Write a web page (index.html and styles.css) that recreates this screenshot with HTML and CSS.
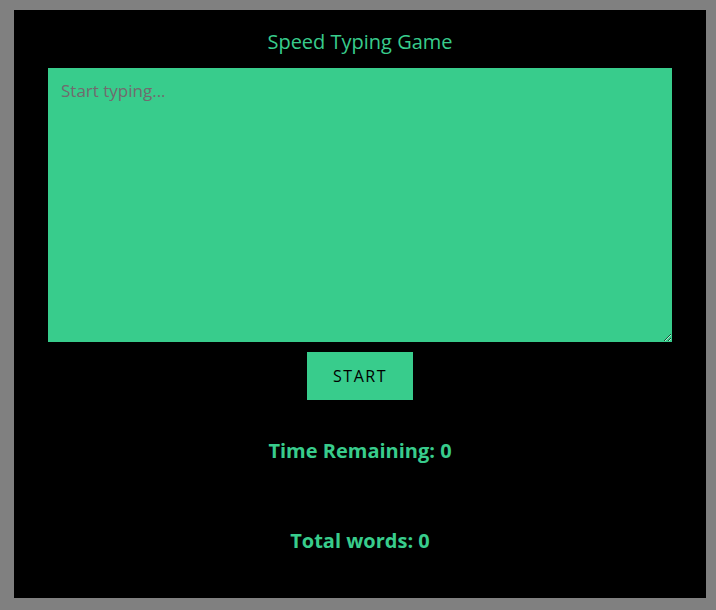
FILE: index.html
```html
<!DOCTYPE html>
<html lang="en">
<head>
<meta charset="utf-8">
<title>Speed Typing Game</title>
<link rel="stylesheet" href="styles.css">
</head>
<body>
  <main class="game">
    <h1 class="title">Speed Typing Game</h1>
    <textarea class="typing-area" placeholder="Start typing..."></textarea>
    <button class="start-btn">START</button>
    <h2 class="stat stat-time">Time Remaining: 0</h2>
    <h2 class="stat stat-words">Total words: 0</h2>
  </main>
</body>
</html>
```

FILE: styles.css
```css
html, body {
  margin: 0;
  padding: 0;
}

body {
  background: #808080;
  padding: 10px 10px 12px 14px;
  font-family: "Comic Sans MS", "Open Sans", "DejaVu Sans", sans-serif;
}

.game {
  background: #000;
  height: 588px;
  box-sizing: border-box;
  padding: 18px 34px 0;
  display: flex;
  flex-direction: column;
  align-items: center;
}

.title {
  margin: 0;
  font-size: 20px;
  line-height: 28px;
  font-weight: normal;
  color: #38cc8c;
}

.typing-area {
  margin-top: 12px;
  width: 100%;
  height: 274px;
  box-sizing: border-box;
  border: none;
  outline: none;
  background: #38cc8c;
  padding: 12px 13px;
  font-family: inherit;
  font-size: 17px;
  line-height: 22px;
  color: #000;
}

.typing-area::placeholder {
  color: #726a6e;
}

.start-btn {
  margin-top: 10px;
  width: 106px;
  height: 48px;
  border: none;
  background: #38cc8c;
  color: #000;
  font-family: inherit;
  font-size: 16px;
  letter-spacing: 1.5px;
  cursor: pointer;
}

.stat {
  margin: 0;
  font-size: 20px;
  line-height: 28px;
  font-weight: bold;
  color: #38cc8c;
}

.stat-time {
  margin-top: 37px;
}

.stat-words {
  margin-top: 62px;
}
```
